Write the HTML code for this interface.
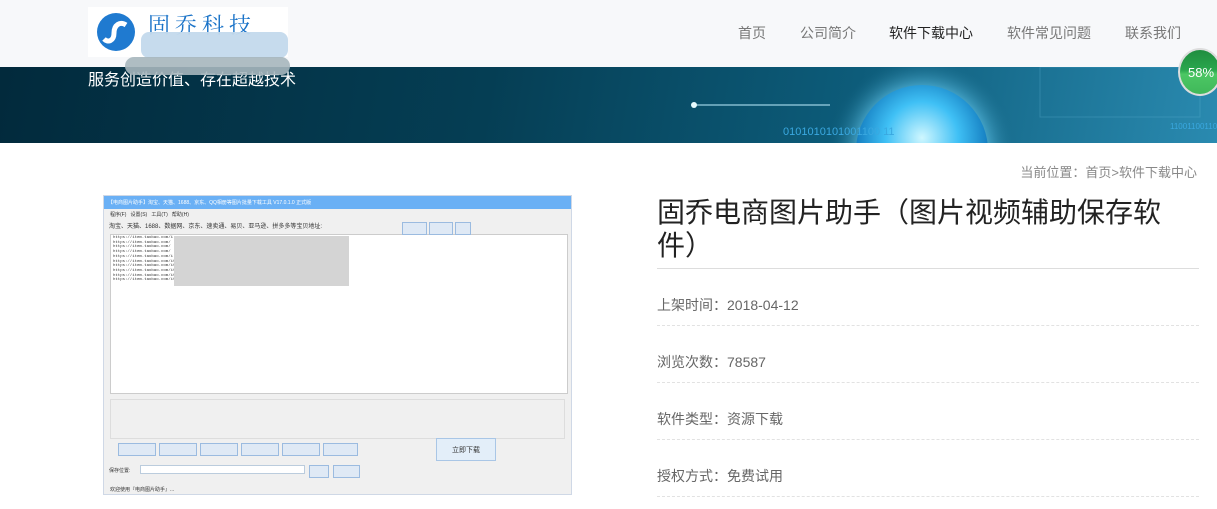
<!DOCTYPE html>
<html><head><meta charset="utf-8"><style>
*{margin:0;padding:0;box-sizing:border-box}
body{width:1217px;height:509px;overflow:hidden;background:#fff;font-family:"Liberation Sans","Noto Sans CJK SC",sans-serif;position:relative}
.hdr{position:absolute;left:0;top:0;width:1217px;height:67px;background:#f7f8fa}
.logo{position:absolute;left:88px;top:7px;width:200px;height:50px;background:#fff}
.nav{position:absolute;top:23px;font-size:14px;color:#777}
.ban{position:absolute;left:0;top:67px;width:1217px;height:76px;background:linear-gradient(100deg,#022a3c 0%,#053e54 40%,#0d5c7a 70%,#2a8ab0 100%);overflow:hidden}
.slog{position:absolute;left:88px;top:66px;color:#fff;font-size:16px}
.blur{position:absolute;border-radius:10px}
.crumb{position:absolute;right:20px;top:162px;font-size:13px;color:#888}
.title{position:absolute;left:657px;top:196px;width:530px;font-size:28px;line-height:33px;color:#222}
.hr{position:absolute;left:657px;width:542px;top:268px;border-top:1px solid #ddd}
.row{position:absolute;left:657px;width:542px;font-size:14px;color:#666;height:20px}
.dash{position:absolute;left:657px;width:542px;border-top:1px dashed #e2e2e2}
.shot{position:absolute;left:103px;top:195px;width:469px;height:300px;background:#f0f0f0;border:1px solid #cfd8e6;font-size:5px;color:#333}
.btn{position:absolute;height:13px;background:#dfe9f5;border:1px solid #9bbbe0}
</style></head><body>
<div class="hdr"></div>
<div class="logo">
<svg width="50" height="50" style="position:absolute;left:2px;top:0"><circle cx="26" cy="25" r="19" fill="#1f7ad0"/><path d="M14 32 C18 36 24 34 24 26 C24 18 30 14 36 18" stroke="#fff" stroke-width="5" fill="none"/></svg>
<div style="position:absolute;left:60px;top:2px;font-size:22px;color:#1a73c8;letter-spacing:5px;font-family:'Noto Serif CJK SC',serif">固乔科技</div>
</div>
<div class="ban">
<svg width="1217" height="76" style="position:absolute;left:0;top:0">
<defs><radialGradient id="g" cx="50%" cy="40%" r="55%"><stop offset="0" stop-color="#cff7ff"/><stop offset=".5" stop-color="#3fc0f5"/><stop offset="1" stop-color="#0b6fb5"/></radialGradient><radialGradient id="h" cx="50%" cy="50%" r="50%"><stop offset=".7" stop-color="#6fd8ff" stop-opacity=".45"/><stop offset="1" stop-color="#0d5c7a" stop-opacity="0"/></radialGradient></defs>
<circle cx="922" cy="84" r="95" fill="url(#h)"/>
<circle cx="922" cy="84" r="66" fill="url(#g)"/>
<line x1="694" y1="38" x2="830" y2="38" stroke="#bfefff" stroke-width="1"/>
<circle cx="694" cy="38" r="3" fill="#e8fbff"/>
<text x="783" y="68" font-size="11" fill="#3aa8e0" font-family="Liberation Sans">0101010101001100 11</text>
<text x="1170" y="62" font-size="8" fill="#3aa8e0" font-family="Liberation Sans">110011001100</text>
<rect x="1040" y="0" width="160" height="50" fill="none" stroke="#5fb3d5" stroke-opacity=".3"/>
</svg>
</div>
<div class="slog">服务创造价值、存在超越技术</div>
<div class="blur" style="left:141px;top:32px;width:147px;height:26px;background:#c3d9ec;opacity:.95;border-radius:8px"></div>
<div class="blur" style="left:125px;top:57px;width:165px;height:18px;background:#a6b6bc;opacity:.9"></div>
<div class="nav" style="left:738px">首页</div>
<div class="nav" style="left:800px">公司简介</div>
<div class="nav" style="left:889px;color:#222">软件下载中心</div>
<div class="nav" style="left:1007px">软件常见问题</div>
<div class="nav" style="left:1125px">联系我们</div>
<div style="position:absolute;left:1178px;top:48px;width:44px;height:48px;border-radius:50%;background:linear-gradient(#1f8d3f 0,#2aa64d 45%,#4cc764 55%,#40b85a 100%);border:2px solid #ddd;color:#fff;font-size:13px;padding:15px 0 0 8px">58%</div>

<div class="crumb">当前位置：首页&gt;软件下载中心</div>

<div class="shot">
<div style="height:13px;background:#6ab0f5;color:#fff;padding:3px 4px;font-size:5px">【电商图片助手】淘宝、天猫、1688、京东、QQ相册等图片批量下载工具 V17.0.1.0 正式版</div>
<div style="height:10px;padding:2px 6px">程序(F) &nbsp; 设置(S) &nbsp; 工具(T) &nbsp; 帮助(H)</div>
<div style="padding:2px 5px;font-size:6px">淘宝、天猫、1688、数据网、京东、速卖通、易贝、亚马逊、拼多多等宝贝地址:</div>
<div style="position:absolute;left:6px;top:38px;width:458px;height:160px;background:#fff;border:1px solid #ccc;font-family:'Liberation Mono',monospace;font-size:4px;line-height:4.7px;padding:1px 2px;color:#333">https://item.taobao.com/i<br>https://item.taobao.com/<br>https://item.taobao.com/<br>https://item.taobao.com/<br>https://item.taobao.com/i<br>https://item.taobao.com/item<br>https://item.taobao.com/item.h<br>https://item.taobao.com/item.h<br>https://item.taobao.com/item.<br>https://item.taobao.com/item.</div>
<div style="position:absolute;left:70px;top:40px;width:175px;height:50px;background:#d4d4d4"></div>
<div class="btn" style="left:298px;top:26px;width:25px"></div><div class="btn" style="left:325px;top:26px;width:24px"></div><div class="btn" style="left:351px;top:26px;width:16px"></div>
<div style="position:absolute;left:6px;top:203px;width:455px;height:40px;border:1px solid #ddd"></div>
<div class="btn" style="left:14px;top:247px;width:38px"></div><div class="btn" style="left:55px;top:247px;width:38px"></div><div class="btn" style="left:96px;top:247px;width:38px"></div><div class="btn" style="left:137px;top:247px;width:38px"></div><div class="btn" style="left:178px;top:247px;width:38px"></div><div class="btn" style="left:219px;top:247px;width:35px"></div>
<div style="position:absolute;left:332px;top:242px;width:60px;height:23px;background:#e3eef9;border:1px solid #a9c6e6;font-size:7px;text-align:center;padding-top:6px">立即下载</div>
<div style="position:absolute;left:5px;top:271px;font-size:5px">保存位置:</div>
<div style="position:absolute;left:36px;top:269px;width:165px;height:9px;background:#fff;border:1px solid #bcd"></div>
<div class="btn" style="left:205px;top:269px;width:20px"></div><div class="btn" style="left:229px;top:269px;width:27px"></div>
<div style="position:absolute;left:6px;top:290px;font-size:5px">欢迎使用『电商图片助手』...</div>
</div>

<div class="title">固乔电商图片助手（图片视频辅助保存软件）</div>
<div class="hr"></div>
<div class="row" style="top:295px">上架时间：2018-04-12</div>
<div class="dash" style="top:325px"></div>
<div class="row" style="top:352px">浏览次数：78587</div>
<div class="dash" style="top:382px"></div>
<div class="row" style="top:409px">软件类型：资源下载</div>
<div class="dash" style="top:439px"></div>
<div class="row" style="top:466px">授权方式：免费试用</div>
<div class="dash" style="top:496px"></div>
</body></html>
